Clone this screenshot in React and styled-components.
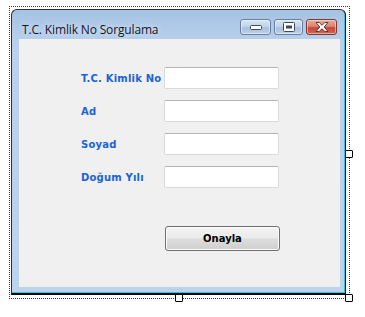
import { Fragment } from "react";
import styled, { createGlobalStyle } from "styled-components";

const Global = createGlobalStyle`
  html, body { margin: 0; padding: 0; background: #ffffff; }
  body { width: 365px; height: 317px; overflow: hidden; }
`;

const Designer = styled.div`
  position: relative;
  width: 337px;
  height: 288px;
  margin: 6px 0 0 9px;
  padding: 2px 1px 1px 1px;
  border: 1px dotted #3a3a3a;
  box-sizing: content-box;
`;

const Handle = styled.div`
  position: absolute;
  width: 6px;
  height: 6px;
  background: #ffffff;
  border: 1px solid #000;
  border-radius: 1px;
  left: ${(p) => p.$x}px;
  top: ${(p) => p.$y}px;
`;

const Window = styled.div`
  width: 335px;
  height: 286px;
  box-sizing: border-box;
  display: flex;
  flex-direction: column;
  border: 1px solid #2e2e2e;
  border-right-color: #000;
  border-bottom: 2px solid #000;
  border-radius: 6px 6px 0 0;
  background: linear-gradient(#a6c2e4 0%, #b9d1ec 12%, #bcd3ec 100%);
  box-shadow: inset -1px -1px 0 #2ec6e6;
  padding: 0 5px 6px 7px;
`;

const TitleBar = styled.div`
  height: 29px;
  display: flex;
  align-items: flex-start;
  justify-content: space-between;
  padding-left: 3px;
  padding-right: 3px;
`;

const Title = styled.span`
  margin-top: 11px;
  font-family: "Open Sans", "Noto Sans", sans-serif;
  font-size: 12px;
  color: #141428;
  letter-spacing: -0.15px;
  text-shadow: 0 0 6px rgba(255, 255, 255, 0.8);
`;

const Caption = styled.div`
  display: flex;
  gap: 3px;
  margin-top: 9px;
`;

const CapBtn = styled.div`
  width: ${(p) => p.$w}px;
  height: 16px;
  box-sizing: border-box;
  border: 1px solid ${(p) => (p.$close ? "#7d3a31" : "#6a7f9e")};
  border-radius: 3px;
  display: flex;
  align-items: center;
  justify-content: center;
  background: ${(p) =>
    p.$close
      ? "linear-gradient(#e8a99b 0%, #d98674 45%, #c7473a 55%, #d2654f 100%)"
      : "linear-gradient(#d6e3f2 0%, #c4d5ea 45%, #a9bfdc 55%, #bcd0e8 100%)"};
  box-shadow: inset 0 0 0 1px rgba(255, 255, 255, 0.45);
`;

const Client = styled.div`
  flex: 1;
  background: #f0f0f0;
  display: flex;
  flex-direction: column;
  padding: 28px 0 0 62px;
`;

const Form = styled.div`
  display: grid;
  grid-template-columns: 83px 115px;
  row-gap: 11px;
  align-items: center;
`;

const Label = styled.label`
  font-family: "DejaVu Sans", sans-serif;
  font-weight: bold;
  font-size: 10px;
  letter-spacing: 0.2px;
  color: #1a63d6;
  white-space: nowrap;
`;

const Input = styled.input`
  width: 115px;
  height: 22px;
  box-sizing: border-box;
  border: 1px solid #dadada;
  border-top-color: #b5b5b5;
  border-radius: 2px;
  background: #ffffff;
  outline: none;
`;

const Button = styled.button`
  margin: 38px 0 0 84px;
  width: 115px;
  height: 25px;
  border: 1px solid #707070;
  border-radius: 3px;
  background: linear-gradient(#f3f3f3 0%, #ebebeb 48%, #dddddd 52%, #cfcfcf 100%);
  box-shadow: inset 0 0 0 1px #fcfcfc;
  font-family: "DejaVu Sans", sans-serif;
  font-weight: bold;
  font-size: 10px;
  color: #000;
  padding: 0;
`;

const MinIcon = () => (
  <svg width="12" height="6" viewBox="0 0 12 6">
    <rect x="0.5" y="1.5" width="11" height="4" rx="1" fill="#fff" stroke="#3a4a60" />
  </svg>
);

const MaxIcon = () => (
  <svg width="12" height="10" viewBox="0 0 12 10">
    <rect x="0.5" y="0.5" width="11" height="9" rx="1" fill="#fff" stroke="#3a4a60" />
    <rect x="3" y="3.5" width="6" height="3" fill="#3a4a60" />
  </svg>
);

const CloseIcon = () => (
  <svg width="14" height="10" viewBox="0 0 14 10">
    <path
      d="M1 0.5h3.2L7 3.3 9.8 0.5H13L9.2 5 13 9.5H9.8L7 6.7 4.2 9.5H1L4.8 5z"
      fill="#fff"
      stroke="#5a2620"
      strokeWidth="0.9"
      strokeLinejoin="round"
    />
  </svg>
);

const fields = ["T.C. Kimlik No", "Ad", "Soyad", "Doğum Yılı"];

export default function App() {
  return (
    <>
      <Global />
      <Designer>
        <Window>
          <TitleBar>
            <Title>T.C. Kimlik No Sorgulama</Title>
            <Caption>
              <CapBtn $w={31}>
                <MinIcon />
              </CapBtn>
              <CapBtn $w={29}>
                <MaxIcon />
              </CapBtn>
              <CapBtn $w={31} $close>
                <CloseIcon />
              </CapBtn>
            </Caption>
          </TitleBar>
          <Client>
            <Form>
              {fields.map((f) => (
                <Fragment key={f}>
                  <Label>{f}</Label>
                  <Input />
                </Fragment>
              ))}
            </Form>
            <Button>Onayla</Button>
          </Client>
        </Window>
        <Handle $x={335} $y={143} />
        <Handle $x={165} $y={287} />
        <Handle $x={335} $y={287} />
      </Designer>
    </>
  );
}
